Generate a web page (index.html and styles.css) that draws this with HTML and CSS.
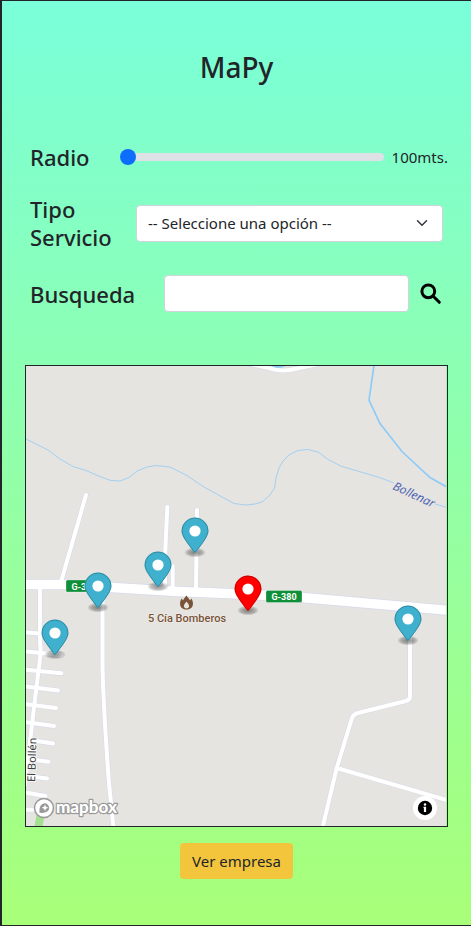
FILE: index.html
```html
<!DOCTYPE html>
<html lang="es">
<head>
<meta charset="utf-8">
<meta name="viewport" content="width=device-width, initial-scale=1">
<title>MaPy</title>
<link rel="stylesheet" href="styles.css">
</head>
<body>
<main class="page">
  <h1 class="title">MaPy</h1>

  <form class="filters">
    <div class="row row-range">
      <label class="label" for="radio">Radio</label>
      <input class="range" type="range" id="radio" min="100" max="5000" value="100">
      <output class="range-value" for="radio">100mts.</output>
    </div>
    <div class="row row-select">
      <label class="label" for="tipo">Tipo Servicio</label>
      <div class="select-box">
        <select class="control select" id="tipo">
          <option>-- Seleccione una opción --</option>
        </select>
        <svg class="chevron" viewBox="0 0 16 16" aria-hidden="true"><path d="m2 5 6 6 6-6"/></svg>
      </div>
    </div>
    <div class="row row-search">
      <label class="label" for="busqueda">Busqueda</label>
      <input class="control search" type="text" id="busqueda">
      <button class="search-button" type="button" aria-label="Buscar">
        <svg viewBox="0 0 22 22" aria-hidden="true"><circle cx="8.3" cy="8.3" r="6.4"/><path d="M13 13l6.300 6.300"/></svg>
      </button>
    </div>
  </form>

  <section class="map" aria-label="Mapa">
    <svg class="map-canvas" viewBox="26 366 420 460">
      <defs>
        <radialGradient id="shade">
          <stop offset="0.1" stop-color="#000" stop-opacity="0.42"/>
          <stop offset="0.65" stop-color="#000" stop-opacity="0.24"/>
          <stop offset="1" stop-color="#000" stop-opacity="0"/>
        </radialGradient>
        <g id="pin">
          <ellipse cx="0" cy="21.500" rx="11" ry="5" fill="url(#shade)"/>
          <path d="M13.500 0C13.500 5.600 6.800 13.500 1.200 21Q0 22.400-1.200 21C-6.800 13.500-13.500 5.700-13.500 0A13.500 13.500 0 0 1 13.500 0Z"/>
          <path d="M13 0C13 5.400 6.400 13.300 .8 20.700Q0 21.600-.8 20.700C-6.400 13.300-13 5.500-13 0A13 13 0 0 1 13 0Z" fill="none" stroke="#000" stroke-opacity=".22"/>
          <circle r="5.600" fill="#fff"/>
        </g>
        <g id="streets">
          <path d="M86 495 61 582M167.300 507 165.200 553 165 588M172.700 566V588M197 510 196 588M40 588V640L40.700 653 36.500 687 32.500 720 30 742 25 785"/>
          <path d="M24 632.400 40 633.500M24 651.300 61.500 655M24 669.500 61.500 673.300M24 686.200 58 690.600M24 704 56 708M24 722 54 726M30 740 53 743.600M24 758.400 48.500 761.700M24 775.600 47 778.400M24 792.300 45.500 796M24 809.700H36"/>
          <path d="M102.500 600V665L103 685 105.300 730 108.700 780 113.500 828"/>
          <path d="M410 636V696Q410 700 406 701L358 713Q353.500 714 352 718L336.700 768 322.500 828M336.700 768 448 800.500"/>
        </g>
        <path id="highway" d="M20 584.500H65L120 588 173 591.300 240 594 302 597.500 450 610.500"/>
        <path id="north" d="M246 363 275 369.500Q284 371.500 295 369L318 364"/>
      </defs>
      <rect class="land" x="26" y="366" width="420" height="460"/>
      <path class="park" d="M43 800 38 830"/>
      <path class="stream" d="M26 439 48 450 60 459 73 466.500 86 470.500 101 477 111 480.500 120 481 129 477.500 137 471 147 467 156 465.500 170 467 186 475 204 487 222 497 234 503.500 246 505 255 504 262 502 270 495 274.500 488 276 478 279 468 283 461 289 455 298 450.500 308 449.500 318 452 329 460 342 466.500 378 477 394 483M435 504 447 507.500"/>
      <path class="river" d="M374 365 369 400 380 423.500 402 451.500 430 477.500 447 487"/>
      <use class="road casing" href="#streets"/>
      <use class="road casing wide" href="#highway"/>
      <use class="road casing" href="#north"/>
      <use class="road" href="#streets"/>
      <use class="road wide" href="#highway"/>
      <use class="road" href="#north"/>
      <path class="pond" d="M268 365H288L281 367.800H276Z"/>

      <g class="shield"><rect x="66" y="580" width="36" height="12" rx="1.500"/><text x="84" y="589.500">G-380</text></g>
      <g class="shield"><rect x="266" y="590.500" width="36" height="12" rx="1.500"/><text x="284" y="600">G-380</text></g>
      <path class="fire" fill-rule="evenodd" d="M186.300 595.500C187.500 597 189 598.500 190 600.500Q190.600 599.300 191.500 598.500C192.500 600.500 193.200 602.500 192.900 604.800C192.500 608 189.700 609.500 186.500 609.500S180.500 608 180.100 604.800C179.800 602.500 180.500 600.500 181.500 598.500Q182.400 599.300 183 600.500C184 598.500 185.300 597 186.300 595.500ZM186.500 601.500C185.300 603 183.700 604.700 183.900 606.400A2.650 2.500 0 0 0 189.100 606.400C189.300 604.700 187.700 603 186.500 601.500Z"/>
      <text class="place" x="187" y="622">5 Cía Bomberos</text>
      <text class="water-name" transform="translate(392 489) rotate(25)">Bollenar</text>
      <text class="street-name" transform="translate(35 782) rotate(-88)">El Bollén</text>

      <use class="pin" href="#pin" x="195" y="531"/>
      <use class="pin" href="#pin" x="158" y="565"/>
      <use class="pin" href="#pin" x="98" y="586"/>
      <use class="pin" href="#pin" x="55" y="633"/>
      <use class="pin pin-current" href="#pin" x="248" y="589"/>
      <use class="pin" href="#pin" x="408" y="619"/>
    </svg>
    <a class="map-logo" href="#mapbox" aria-label="mapbox">
      <svg viewBox="0 0 88 22">
        <circle cx="11" cy="11" r="9.500" fill="#fff" stroke="#999" stroke-width="1.500"/>
        <path d="M6.500 15.800C6 10 8 6.300 12 6.300A4.600 4.600 0 0 1 15.300 13.500C13.500 15.500 10.500 16.200 6.500 15.800Z" fill="#999"/>
        <path d="M12 7.500 13 9.800 15.300 10.800 13 11.800 12 14.100 11 11.800 8.700 10.800 11 9.800Z" fill="#fff"/>
        <text class="logo-text" x="23" y="16">mapbox</text>
      </svg>
    </a>
    <button class="map-info" type="button" aria-label="Información">
      <svg viewBox="0 0 24 24" aria-hidden="true"><circle cx="12" cy="12" r="7.200"/><circle cx="12" cy="8.500" r="1.200" fill="#fff"/><path d="M10.500 10.700H13.100V15.900H10.900V12H10.500Z" fill="#fff"/></svg>
    </button>
  </section>

  <button class="action" type="button">Ver empresa</button>
</main>
</body>
</html>
```
FILE: styles.css
```css
* { box-sizing: border-box; }

body {
  margin: 0;
  font-family: "Noto Sans", "Open Sans", sans-serif;
  font-size: 15px;
  line-height: 24px;
  color: #212529;
}

.page {
  display: flex;
  flex-direction: column;
  min-height: 100vh;
  padding: 49px 23px 45px;
  border: solid #212529;
  border-width: 1px 0 1px 2px;
  background: linear-gradient(#7affda, #a8ff78);
}

.title {
  margin: 0 0 59px;
  font-size: 28px;
  line-height: 34px;
  font-weight: 500;
  text-align: center;
}

.filters {
  display: flex;
  flex-direction: column;
  gap: 24px;
  margin-bottom: 53px;
}

.row {
  display: flex;
  align-items: center;
  padding: 0 5px;
}

.row-range { gap: 8px; padding-right: 0; }
.row-search { gap: 10px; }

.label {
  flex: none;
  font-size: 22px;
  line-height: 28px;
  font-weight: 500;
}

.row-range .label { width: 82px; }
.row-select .label { width: 106px; }
.row-search .label { width: 124px; }

.range {
  flex: 1;
  min-width: 0;
  height: 24px;
  margin: 0;
  appearance: none;
  background: transparent;
}

.range::-webkit-slider-runnable-track {
  height: 8px;
  border-radius: 16px;
  background: #dee2e6;
}

.range::-webkit-slider-thumb {
  appearance: none;
  width: 16px;
  height: 16px;
  margin-top: -4px;
  border-radius: 50%;
  background: #0d6efd;
}

.control {
  width: 100%;
  min-width: 0;
  height: 37px;
  margin: 0;
  padding: 0 11px;
  border: 1px solid #ced4da;
  border-radius: 4px;
  background: #fff;
  color: #212529;
  font: inherit;
}

.search { flex: 1; }

.select-box {
  display: grid;
  flex: 1;
  align-items: center;
}

.select-box > * { grid-area: 1 / 1; }

.select { appearance: none; }

.chevron {
  justify-self: end;
  width: 12px;
  height: 12px;
  margin-right: 15px;
  fill: none;
  stroke: #343a40;
  stroke-width: 2;
  stroke-linecap: round;
  stroke-linejoin: round;
  pointer-events: none;
}

.search-button {
  flex: none;
  width: 24px;
  height: 24px;
  padding: 1px;
  border: 0;
  background: transparent;
}

.search-button svg {
  display: block;
  fill: none;
  stroke: #000;
  stroke-width: 3;
  stroke-linecap: round;
}

.map {
  position: relative;
  padding-right: 1px;
  border: 1px solid #212529;
}

.map-canvas { display: block; width: 100%; }

.land { fill: #e5e4e0; }
.park { stroke: #a5e092; stroke-width: 8; }
.pond { fill: #8ecbf7; }
.stream { fill: none; stroke: #a3d0f1; stroke-width: 1; }
.river { fill: none; stroke: #8ecbf7; stroke-width: 1.7; }

.road {
  fill: none;
  stroke: #fff;
  stroke-width: 4;
  stroke-linecap: round;
  stroke-linejoin: round;
}

.road.wide { stroke-width: 9.4; }
.road.casing { stroke: #d8daea; stroke-width: 5.2; }
.road.casing.wide { stroke-width: 11; }

.shield rect { fill: #0f8f38; stroke: #fff; stroke-opacity: 0.5; stroke-width: 0.6; }
.shield text {
  fill: #fff;
  font: 700 9px Roboto, sans-serif;
  text-anchor: middle;
}

.fire { fill: #785338; }

.place {
  fill: #785338;
  stroke: #f2f0ec;
  stroke-width: 1;
  paint-order: stroke;
  font: 500 11px Roboto, sans-serif;
  text-anchor: middle;
}

.water-name { fill: #5064b4; font: italic 12px "Noto Sans", sans-serif; }

.street-name {
  fill: #3c3c3c;
  stroke: #fff;
  stroke-width: 1.5;
  paint-order: stroke;
  font: 11px "Noto Sans", sans-serif;
}

.pin { fill: #3fb1ce; }
.pin-current { fill: #f00; }

.map-logo {
  position: absolute;
  left: 7px;
  bottom: 7px;
  width: 88px;
  height: 22px;
}

.map-logo svg { display: block; }

.logo-text {
  fill: #fff;
  stroke: #999;
  stroke-width: 2.4;
  stroke-linejoin: round;
  paint-order: stroke;
  font: 900 17px Lato, sans-serif;
}

.map-info {
  position: absolute;
  right: 10px;
  bottom: 6px;
  width: 24px;
  height: 24px;
  padding: 0;
  border: 0;
  border-radius: 50%;
  background: #fff;
}

.map-info svg { display: block; }

.action {
  align-self: center;
  margin-top: 16px;
  padding: 6px 12px;
  border: 0;
  border-radius: 4px;
  background: #f3c53c;
  color: #212529;
  font: inherit;
}
```
